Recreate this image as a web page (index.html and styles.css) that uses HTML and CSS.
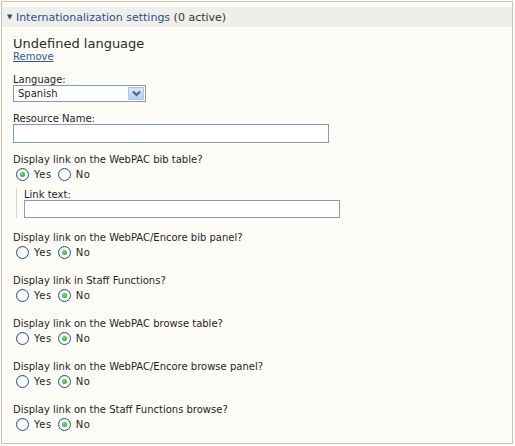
FILE: index.html
```html
<!DOCTYPE html>
<html lang="en">
<head>
    <meta charset="UTF-8">
    <title>Internationalization settings</title>
    <link rel="stylesheet" href="styles.css">
</head>
<body>
    <div class="panel">
        <div class="panel-head">
            <span class="toggle">&#9660;</span>
            <a href="#" class="head-link">Internationalization settings</a>
            <span class="count">(0 active)</span>
        </div>

        <div class="panel-body">
            <h2 class="lang-title">Undefined language</h2>
            <a href="#" class="remove">Remove</a>

            <div class="field text-field lang-field">
                <label for="language">Language:</label>
                <div class="select-wrap">
                    <select id="language">
                        <option>Spanish</option>
                        <option>French</option>
                        <option>German</option>
                    </select>
                    <span class="select-btn">
                        <svg width="9" height="7" viewBox="0 0 9 7"><path d="M1 1.5 L4.5 5 L8 1.5" fill="none" stroke="#4d6185" stroke-width="2"/></svg>
                    </span>
                </div>
            </div>

            <div class="field text-field">
                <label for="resource">Resource Name:</label>
                <input type="text" id="resource" class="text wide">
            </div>

            <div class="field text-field">
                <p class="question">Display link on the WebPAC bib table?</p>
                <div class="choices">
                    <label><input type="radio" name="bib" checked> Yes</label>
                    <label><input type="radio" name="bib"> No</label>
                </div>
                <div class="sub">
                    <label for="linktext">Link text:</label>
                    <input type="text" id="linktext" class="text wide short">
                </div>
            </div>

            <div class="field after-sub">
                <p class="question">Display link on the WebPAC/Encore bib panel?</p>
                <div class="choices">
                    <label><input type="radio" name="encbib"> Yes</label>
                    <label><input type="radio" name="encbib" checked> No</label>
                </div>
            </div>

            <div class="field">
                <p class="question">Display link in Staff Functions?</p>
                <div class="choices">
                    <label><input type="radio" name="staff"> Yes</label>
                    <label><input type="radio" name="staff" checked> No</label>
                </div>
            </div>

            <div class="field">
                <p class="question">Display link on the WebPAC browse table?</p>
                <div class="choices">
                    <label><input type="radio" name="browse"> Yes</label>
                    <label><input type="radio" name="browse" checked> No</label>
                </div>
            </div>

            <div class="field">
                <p class="question">Display link on the WebPAC/Encore browse panel?</p>
                <div class="choices">
                    <label><input type="radio" name="encbrowse"> Yes</label>
                    <label><input type="radio" name="encbrowse" checked> No</label>
                </div>
            </div>

            <div class="field">
                <p class="question">Display link on the Staff Functions browse?</p>
                <div class="choices">
                    <label><input type="radio" name="staffbrowse"> Yes</label>
                    <label><input type="radio" name="staffbrowse" checked> No</label>
                </div>
            </div>
        </div>
    </div>
</body>
</html>
```

FILE: styles.css
```css
* {
    margin: 0;
    padding: 0;
    box-sizing: border-box;
}

body {
    background: #fdfcf7;
    font-family: 'DejaVu Sans', Verdana, sans-serif;
    font-size: 10px;
    color: #1f1f1f;
}

.panel {
    margin: 1px;
    width: 512px;
    height: 443px;
    border: 1px solid #c8c3b6;
    padding-top: 5px;
}

/* collapsible header bar */
.panel-head {
    height: 20px;
    background: #eeeeeb;
    padding: 5px 0 0 5px;
    font-size: 11px;
    line-height: 11px;
}

.toggle {
    color: #2d4e86;
    font-size: 7px;
    vertical-align: 2px;
}

.head-link {
    color: #2d4e86;
    text-decoration: none;
}

.count {
    color: #333;
}

.panel-body {
    padding: 9px 0 0 11px;
}

.lang-title {
    font-size: 13px;
    font-weight: normal;
    line-height: 15px;
    color: #2b2b2b;
}

.remove {
    display: block;
    color: #2d5a96;
    font-size: 10px;
    line-height: 11px;
}

/* radio groups sit further apart than the text inputs */
.field {
    margin-top: 15px;
}

.field.text-field {
    margin-top: 11px;
}

.field.lang-field {
    margin-top: 12px;
}

.field.after-sub {
    margin-top: 14px;
}

.field > label,
.sub > label,
.question {
    display: block;
    line-height: 11px;
}

.select-wrap {
    position: relative;
    width: 133px;
    height: 17px;
}

select {
    appearance: none;
    -webkit-appearance: none;
    display: block;
    width: 133px;
    height: 17px;
    border: 1px solid #7f9db9;
    background: #fff;
    font-family: inherit;
    font-size: 10px;
    padding-left: 4px;
    color: #1f1f1f;
}

/* XP style dropdown arrow button */
.select-btn {
    position: absolute;
    top: 2px;
    right: 2px;
    width: 16px;
    height: 13px;
    background: linear-gradient(#dbe6fb, #b9cdf5);
    border: 1px solid #b2c5ee;
    display: flex;
    align-items: center;
    justify-content: center;
    pointer-events: none;
}

.text {
    display: block;
    height: 19px;
    border: 1px solid #7f9db9;
    background: #fff;
}

.text.short {
    height: 18px;
}

.wide {
    width: 316px;
}

.choices {
    display: flex;
    gap: 6px;
    margin-top: 2px;
    padding-left: 3px;
}

.choices label {
    display: flex;
    align-items: center;
    gap: 5px;
    height: 15px;
    font-size: 10px;
    letter-spacing: 0.5px;
}

input[type="radio"] {
    appearance: none;
    -webkit-appearance: none;
    width: 13px;
    height: 13px;
    border: 1px solid #1f5185;
    border-radius: 50%;
    background: radial-gradient(circle at 65% 65%, #fff 40%, #dcdcd6 100%);
    display: grid;
    place-content: center;
}

input[type="radio"]:checked::before {
    content: "";
    width: 5px;
    height: 5px;
    border-radius: 50%;
    background: radial-gradient(circle at 40% 40%, #6fe06f, #1f9a22);
}

.sub {
    border-left: 1px solid #d6d6d0;
    margin: 6px 0 0 3px;
    padding: 1px 0 0 7px;
}
```
